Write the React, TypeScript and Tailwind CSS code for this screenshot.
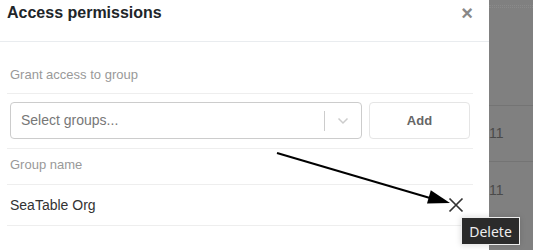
const font = { fontFamily: '"Liberation Sans", Arial, sans-serif' }

function Backdrop() {
  return (
    <div className="flex-1 bg-[#808080] flex flex-col text-[14px] text-[#4a4a4a]" style={font}>
      <div className="h-[5px]" />
      <div className="h-[3px] border-y border-dotted border-[#8a8a8a]" />
      <div className="h-[98px] border-b border-[#747474]" />
      <div className="h-[56px] border-b border-[#747474] flex items-center">11</div>
      <div className="h-[56px] flex items-center">11</div>
    </div>
  )
}

export default function App() {
  return (
    <div className="relative w-[533px] h-[250px] overflow-hidden flex bg-white" style={font}>
      <div className="w-[489px] bg-white flex flex-col shrink-0">
        {/* header */}
        <div className="h-[42px] border-b border-[#e9ecef] flex items-start justify-between pl-[7px] pr-[16px] pt-[3px]">
          <h2 className="text-[16px] leading-[20px] font-bold text-[#212529]">Access permissions</h2>
          <span className="text-[20px] leading-[20px] font-bold text-[#888]">×</span>
        </div>

        {/* body */}
        <div className="pl-[7px] pr-[16px] flex flex-col">
          <div className="pt-[24px] pb-[9px] pl-[3px] border-b border-[#eee] text-[13px] leading-[18px] text-[#999]">
            Grant access to group
          </div>
          <div className="flex gap-[7px] pl-[3px] pt-[8px] pb-[9px] border-b border-[#eee]">
            <div className="w-[352px] h-[37px] border border-[#ccc] rounded-[4px] flex items-center">
              <span className="flex-1 pl-[10px] text-[14px] text-[#777]">Select groups...</span>
              <span className="w-px h-[20px] bg-[#ccc]" />
              <span className="w-[36px] flex justify-center">
                <svg width="12" height="8" viewBox="0 0 12 8" fill="none">
                  <path d="M1.5 1.5 L6 6 L10.5 1.5" stroke="#ccc" strokeWidth="1.5" />
                </svg>
              </span>
            </div>
            <button className="w-[101px] h-[37px] border border-[#e5e5e5] rounded-[4px] text-[13px] font-bold text-[#666]">
              Add
            </button>
          </div>
          <div className="pt-[7px] pb-[10px] pl-[3px] border-b border-[#eee] text-[13px] leading-[18px] text-[#999]">
            Group name
          </div>
          <div className="flex items-center justify-between pl-[3px] pr-[9px] pt-[11px] pb-[11px] border-b border-[#eee]">
            <span className="text-[14px] leading-[18px] text-[#333]">SeaTable Org</span>
            <svg width="16" height="16" viewBox="0 0 16 16" fill="none">
              <path d="M1.5 1.5 L14.5 14.5 M14.5 1.5 L1.5 14.5" stroke="#333" strokeWidth="1.7" />
            </svg>
          </div>
        </div>
      </div>

      <Backdrop />

      {/* annotation arrow */}
      <svg className="absolute left-0 top-0 pointer-events-none" width="533" height="250">
        <line x1="277" y1="153" x2="430" y2="198" stroke="#000" strokeWidth="2" />
        <polygon points="450,203 427,203.6 430.8,190.2" fill="#000" />
      </svg>

      {/* tooltip */}
      <div
        className="absolute left-[461px] top-[217px] w-[59px] h-[28px] bg-[#2b2b2b] border border-[#eee] flex items-center justify-center text-[14px] text-[#eee] shadow-[0_0_6px_rgba(0,0,0,0.15)]"
        style={{ fontFamily: '"Noto Sans", "DejaVu Sans", sans-serif' }}
      >
        Delete
      </div>
    </div>
  )
}
